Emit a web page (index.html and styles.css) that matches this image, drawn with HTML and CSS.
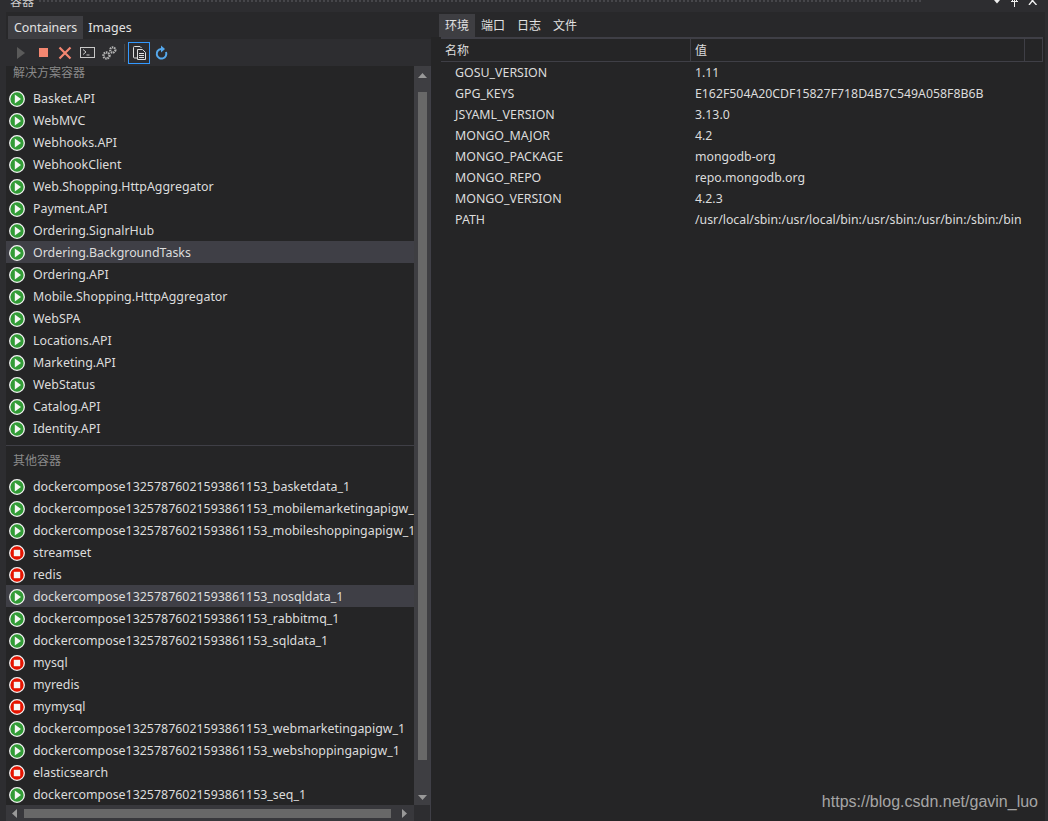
FILE: index.html
```html
<!DOCTYPE html>
<html lang="zh">
<head>
<meta charset="utf-8">
<title>容器</title>
<link rel="stylesheet" href="styles.css">
</head>
<body>
<svg class="defs" width="0" height="0">
  <symbol id="run" viewBox="0 0 16 16"><circle cx="8" cy="8" r="7.300" fill="#329b36" stroke="#f4f4f4" stroke-width="1.300"/><path d="M5.800 3.600 12 8 5.800 12.400Z" fill="#f6f6f6"/></symbol>
  <symbol id="stop" viewBox="0 0 16 16"><circle cx="8" cy="8" r="7.300" fill="#e51400" stroke="#f4f4f4" stroke-width="1.300"/><rect x="4.800" y="4.800" width="6.400" height="6.400" fill="#f6f6f6"/></symbol>
</svg>
<div class="app">
  <header class="title"><span class="title-text">容器</span><span class="grip"></span>
    <span class="win-icons">
      <svg width="8" height="4" viewBox="0 0 8 4"><path d="M1 0h6L4 3.500Z" fill="#eee"/></svg>
      <svg width="9" height="7" viewBox="0 0 9 7"><path d="M4.500 0V7M1 1.500H8M2.500 0V1.500M6.500 0V1.500" stroke="#eee" fill="none"/></svg>
      <svg width="10" height="5" viewBox="0 0 10 5"><path d="M1 5 4.500 0.500 8.500 5M3.500 0 5.500 0" stroke="#eee" stroke-width="1.400" fill="none"/></svg>
    </span>
  </header>
  <main class="panes">
    <section class="left">
      <nav class="tabs ltabs"><span class="tab active">Containers</span><span class="tab">Images</span></nav>
      <div class="toolbar">
        <svg class="tool" width="12" height="14" viewBox="0 0 12 14"><path d="M1 1 9 7 1 13Z" fill="#5a5a5a"/></svg>
        <span class="tool-stop"></span>
        <svg class="tool tool-x" width="14" height="14" viewBox="0 0 14 14"><path d="M1.500 1.500 12.500 12.500M12.500 1.500 1.500 12.500" stroke="#f48771" stroke-width="2.200"/></svg>
        <svg class="tool tool-term" width="15" height="11" viewBox="0 0 15 11"><rect x=".5" y=".5" width="14" height="10" fill="none" stroke="#c8c8c8"/><path d="M3 2.500 6 5 3 7.500M6.500 8h3" stroke="#c8c8c8" fill="none"/></svg>
        <svg class="tool" width="15" height="14" viewBox="0 0 15 14"><circle cx="4.500" cy="9.500" r="3" fill="none" stroke="#b4b4b4" stroke-width="2.400" stroke-dasharray="1.500 .7"/><circle cx="10.800" cy="4" r="2.600" fill="none" stroke="#b4b4b4" stroke-width="2.200" stroke-dasharray="1.500 .7"/></svg>
        <span class="sep"></span>
        <span class="toggle"><svg width="15" height="15" viewBox="0 0 15 15"><path d="M5 13H2.500a1 1 0 0 1-1-1V2.500a1 1 0 0 1 1-1H8L9.500 3" fill="none" stroke="#ddd"/><path d="M5.500 4.500h5l3 3v7h-8Z" fill="none" stroke="#ddd"/><path d="M7 8.500h5M7 10.500h5M7 12.500h5" stroke="#ddd"/></svg></span>
        <svg class="tool" width="13" height="16" viewBox="0 0 13 15"><path d="M6 3.500a4.800 4.800 0 1 0 5 3" fill="none" stroke="#55a8ec" stroke-width="2"/><path d="M6 0v7l4-3.500Z" fill="#55a8ec"/></svg>
      </div>
      <div class="list-wrap">
        <div class="list">
          <h2 class="group first">解决方案容器</h2>
          <ul class="rows">
            <li><svg class="st"><use href="#run"/></svg>Basket.API</li>
            <li><svg class="st"><use href="#run"/></svg>WebMVC</li>
            <li><svg class="st"><use href="#run"/></svg>Webhooks.API</li>
            <li><svg class="st"><use href="#run"/></svg>WebhookClient</li>
            <li><svg class="st"><use href="#run"/></svg>Web.Shopping.HttpAggregator</li>
            <li><svg class="st"><use href="#run"/></svg>Payment.API</li>
            <li><svg class="st"><use href="#run"/></svg>Ordering.SignalrHub</li>
            <li class="sel"><svg class="st"><use href="#run"/></svg>Ordering.BackgroundTasks</li>
            <li><svg class="st"><use href="#run"/></svg>Ordering.API</li>
            <li><svg class="st"><use href="#run"/></svg>Mobile.Shopping.HttpAggregator</li>
            <li><svg class="st"><use href="#run"/></svg>WebSPA</li>
            <li><svg class="st"><use href="#run"/></svg>Locations.API</li>
            <li><svg class="st"><use href="#run"/></svg>Marketing.API</li>
            <li><svg class="st"><use href="#run"/></svg>WebStatus</li>
            <li><svg class="st"><use href="#run"/></svg>Catalog.API</li>
            <li><svg class="st"><use href="#run"/></svg>Identity.API</li>
          </ul>
          <h2 class="group second">其他容器</h2>
          <ul class="rows">
            <li><svg class="st"><use href="#run"/></svg>dockercompose13257876021593861153_basketdata_1</li>
            <li><svg class="st"><use href="#run"/></svg>dockercompose13257876021593861153_mobilemarketingapigw_1</li>
            <li><svg class="st"><use href="#run"/></svg>dockercompose13257876021593861153_mobileshoppingapigw_1</li>
            <li><svg class="st"><use href="#stop"/></svg>streamset</li>
            <li><svg class="st"><use href="#stop"/></svg>redis</li>
            <li class="sel"><svg class="st"><use href="#run"/></svg>dockercompose13257876021593861153_nosqldata_1</li>
            <li><svg class="st"><use href="#run"/></svg>dockercompose13257876021593861153_rabbitmq_1</li>
            <li><svg class="st"><use href="#run"/></svg>dockercompose13257876021593861153_sqldata_1</li>
            <li><svg class="st"><use href="#stop"/></svg>mysql</li>
            <li><svg class="st"><use href="#stop"/></svg>myredis</li>
            <li><svg class="st"><use href="#stop"/></svg>mymysql</li>
            <li><svg class="st"><use href="#run"/></svg>dockercompose13257876021593861153_webmarketingapigw_1</li>
            <li><svg class="st"><use href="#run"/></svg>dockercompose13257876021593861153_webshoppingapigw_1</li>
            <li><svg class="st"><use href="#stop"/></svg>elasticsearch</li>
            <li><svg class="st"><use href="#run"/></svg>dockercompose13257876021593861153_seq_1</li>
          </ul>
        </div>
        <div class="vbar">
          <svg width="9" height="5" viewBox="0 0 9 5"><path d="M0 5 4.500 0 9 5Z" fill="#999"/></svg>
          <div class="vtrack"><div class="vthumb"></div></div>
          <svg width="9" height="5" viewBox="0 0 9 5"><path d="M0 0 4.500 5 9 0Z" fill="#999"/></svg>
        </div>
        <div class="hbar">
          <svg width="5" height="9" viewBox="0 0 5 9"><path d="M5 0 0 4.500 5 9Z" fill="#999"/></svg>
          <div class="htrack"><div class="hthumb"></div></div>
          <svg width="5" height="9" viewBox="0 0 5 9"><path d="M0 0 5 4.500 0 9Z" fill="#999"/></svg>
        </div>
        <div class="corner"></div>
      </div>
    </section>
    <section class="right">
      <nav class="tabs rtabs"><span class="tab active">环境</span><span class="tab">端口</span><span class="tab">日志</span><span class="tab">文件</span></nav>
      <div class="grid-head"><span class="c1">名称</span><span class="c2">值</span><span class="c3"></span></div>
      <dl class="env">
        <div><dt>GOSU_VERSION</dt><dd>1.11</dd></div>
        <div><dt>GPG_KEYS</dt><dd>E162F504A20CDF15827F718D4B7C549A058F8B6B</dd></div>
        <div><dt>JSYAML_VERSION</dt><dd>3.13.0</dd></div>
        <div><dt>MONGO_MAJOR</dt><dd>4.2</dd></div>
        <div><dt>MONGO_PACKAGE</dt><dd>mongodb-org</dd></div>
        <div><dt>MONGO_REPO</dt><dd>repo.mongodb.org</dd></div>
        <div><dt>MONGO_VERSION</dt><dd>4.2.3</dd></div>
        <div><dt>PATH</dt><dd>/usr/local/sbin:/usr/local/bin:/usr/sbin:/usr/bin:/sbin:/bin</dd></div>
      </dl>
      <p class="watermark">https://blog.csdn.net/gavin_luo</p>
    </section>
  </main>
</div>
</body>
</html>
```
FILE: styles.css
```css
* { box-sizing: border-box; }
html, body { margin: 0; height: 100%; }
body {
  background: #252526;
  color: #dcdcdc;
  font: 12.4px/22px "Noto Sans", "Noto Sans CJK SC", sans-serif;
  overflow: hidden;
}
.defs { position: absolute; }
.app { width: 1048px; height: 821px; display: flex; flex-direction: column; overflow: hidden; border-left: 6px solid #2d2d30; border-right: 3px solid #2d2d30; }
.title { height: 12px; flex: none; background: #2d2d30; display: flex; align-items: flex-end; overflow: hidden; margin: 0 -3px 0 -6px; padding-left: 10px; }
.title-text { font-size: 12px; line-height: 16px; height: 16px; flex: none; margin-bottom: 2px; color: #ccc; }
.grip { flex: 1; height: 4px; margin: 0 70px 9px 4px; align-self: flex-end; background: radial-gradient(#46464a 1px, transparent 1.2px) 0 0/4px 4px; }
.win-icons { display: flex; gap: 9px; align-items: flex-start; align-self: flex-start; padding-right: 10px; }
.panes { flex: 1; min-height: 0; display: grid; grid-template-columns: 425px 1fr; }
.left, .right { display: flex; flex-direction: column; min-width: 0; min-height: 0; }
.tabs { height: 27px; flex: none; display: flex; padding: 4px 0 0 2px; background: #28282a; align-items: stretch; }
.tab { padding: 0 6px; line-height: 23px; color: #e2e2e2; }
.tab.active { background: #3e3e42; }
.ltabs .tab + .tab { margin-left: -1px; }
.toolbar { height: 27px; flex: none; display: flex; align-items: center; padding-left: 10px; background: #2d2d30; }
.tool { flex: none; }
.tool-stop { width: 9px; height: 9px; background: #f48771; margin: 0 10px 0 11px; flex: none; }
.tool-x { margin-right: 8px; }
.tool-term { margin-right: 7px; }
.sep { width: 1px; height: 18px; background: #4a4a4a; margin: 0 3px 0 7px; flex: none; }
.toggle { width: 22px; height: 22px; border: 1px solid #3399ff; display: flex; align-items: center; justify-content: center; margin-right: 5px; flex: none; }
.list-wrap { flex: 1; min-height: 0; display: grid; grid-template-columns: 408px 16px; grid-template-rows: 1fr 16px; border-right: 1px solid #3f3f46; }
.list { overflow: hidden; min-width: 0; }
.group { margin: 0; font-weight: 400; font-size: 12px; color: #8a8a8a; line-height: 16px; padding-left: 7px; }
.group.first { height: 22px; margin-top: -1px; }
.group.second { height: 30px; margin-top: 6px; padding-top: 7px; border-top: 1px solid #3f3f46; }
.rows { list-style: none; margin: 0; padding: 0; }
.rows li { height: 22px; display: flex; align-items: center; white-space: nowrap; overflow: hidden; padding: 2px 0 0 3px; }
.rows li.sel { background: #3f3f46; }
.st { width: 16px; height: 16px; flex: none; margin-right: 8px; }
.vbar { background: #3e3e42; display: flex; flex-direction: column; align-items: center; padding: 7px 0 5px; gap: 5px; }
.vtrack { flex: 1; width: 100%; display: flex; justify-content: center; }
.vthumb { width: 9px; background: #686868; margin: 9px 0 30px; }
.hbar { background: #38383c; display: flex; align-items: center; padding: 0 7px 0 6px; gap: 7px; }
.htrack { flex: 1; }
.hthumb { height: 9px; width: 367px; background: #686868; }
.corner { background: #2d2d30; }
.right { position: relative; }
.rtabs { padding: 2px 0 0 8px; height: 25px; }
.rtabs .tab { font-size: 12px; }
.grid-head { height: 25px; flex: none; display: grid; grid-template-columns: 250px 334px 1fr; margin: 0 2px 0 10px; border-top: 2px solid #3f3f46; border-bottom: 1px solid #3f3f46; }
.grid-head span { font-size: 12px; line-height: 23px; padding-left: 4px; border-right: 1px solid #3f3f46; }
.env { margin: 0; padding-left: 10px; }
.env div { display: grid; grid-template-columns: 250px 1fr; height: 21px; line-height: 21px; }
.env dt { padding-left: 14px; }
.env dd { margin: 0; padding-left: 4px; white-space: nowrap; font-size: 12.3px; }
.watermark { position: absolute; right: 7px; bottom: 9px; margin: 0; font: 16px/20px "Liberation Sans", sans-serif; color: #a5a5a5; }
```
